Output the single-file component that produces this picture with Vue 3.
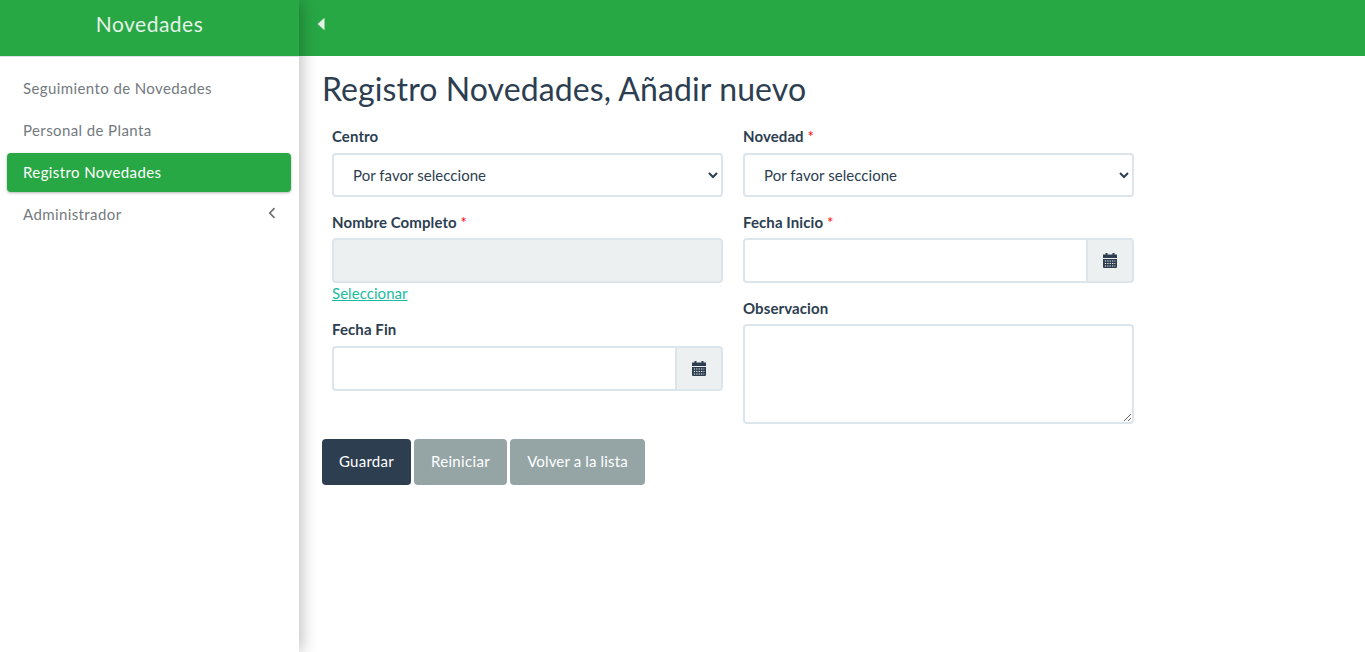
<script setup>
const menu = [
  { label: 'Seguimiento de Novedades' },
  { label: 'Personal de Planta' },
  { label: 'Registro Novedades', active: true },
  { label: 'Administrador', arrow: true }
]
</script>

<template>
  <div class="page">
    <aside class="sidebar">
      <div class="brand">Novedades</div>
      <nav class="menu">
        <a v-for="item in menu" :key="item.label" class="item" :class="{ active: item.active }">
          <span>{{ item.label }}</span>
          <svg v-if="item.arrow" class="chev" width="8" height="12" viewBox="0 0 8 12"><path d="M6.5 1.2 1.8 6l4.7 4.8" fill="none" stroke="#6b7074" stroke-width="1.7"/></svg>
        </a>
      </nav>
    </aside>
    <div class="main">
      <header class="topbar">
        <svg class="toggle" width="8" height="14" viewBox="0 0 8 14"><path d="M7.5 0.8v12.4L0.6 7z" fill="#e4f3e8"/></svg>
      </header>
      <section class="content">
        <h1 class="title">Registro Novedades, Añadir nuevo</h1>
        <form class="form" @submit.prevent>
          <div class="columns">
            <div class="col">
              <div class="group">
                <label>Centro</label>
                <select class="control"><option>Por favor seleccione</option></select>
              </div>
              <div class="group">
                <label>Nombre Completo <i>*</i></label>
                <input class="control disabled" disabled />
                <a class="link">Seleccionar</a>
              </div>
              <div class="group flush">
                <label>Fecha Fin</label>
                <div class="date">
                  <input class="control" />
                  <span class="addon">
                    <svg width="14" height="15" viewBox="0 0 14 15"><path fill="#2c3e50" d="M0 1.5h2.5V0h2v1.5h5V0h2v1.5H14V5H0zM0 6h14v8a1 1 0 0 1-1 1H1a1 1 0 0 1-1-1z"/><path stroke="#fff" stroke-width="1" stroke-dasharray="1.2 1.2" d="M1.9 8h10.4M1.9 10.5h10.4M1.9 13h10.4"/></svg>
                  </span>
                </div>
              </div>
            </div>
            <div class="col">
              <div class="group">
                <label>Novedad <i>*</i></label>
                <select class="control"><option>Por favor seleccione</option></select>
              </div>
              <div class="group">
                <label>Fecha Inicio <i>*</i></label>
                <div class="date">
                  <input class="control" />
                  <span class="addon">
                    <svg width="14" height="15" viewBox="0 0 14 15"><path fill="#2c3e50" d="M0 1.5h2.5V0h2v1.5h5V0h2v1.5H14V5H0zM0 6h14v8a1 1 0 0 1-1 1H1a1 1 0 0 1-1-1z"/><path stroke="#fff" stroke-width="1" stroke-dasharray="1.2 1.2" d="M1.9 8h10.4M1.9 10.5h10.4M1.9 13h10.4"/></svg>
                  </span>
                </div>
              </div>
              <div class="group">
                <label>Observacion</label>
                <textarea class="control area"></textarea>
              </div>
            </div>
          </div>
          <div class="actions">
            <button class="btn primary">Guardar</button>
            <button class="btn muted reset" type="button">Reiniciar</button>
            <button class="btn muted back" type="button">Volver a la lista</button>
          </div>
        </form>
      </section>
    </div>
  </div>
</template>

<style>
html, body { margin: 0; background: #fff; overflow: hidden; }
</style>

<style scoped>
.page {
  display: flex;
  height: 652px;
  font-family: Lato, "Liberation Sans", sans-serif;
  font-size: 15px;
  line-height: 22.5px;
  color: #2c3e50;
}
.sidebar {
  position: relative;
  z-index: 2;
  width: 299px;
  flex: none;
  background: #fff;
  box-shadow: 3px 0 15px rgba(0, 0, 0, 0.25);
}
.brand {
  height: 57px;
  background: #28a745;
  color: #e4f3e8;
  font-size: 21px;
  letter-spacing: 0.5px;
  line-height: 48px;
  text-align: center;
  border-bottom: 1px solid #dee2e6;
  box-sizing: border-box;
}
.menu {
  display: flex;
  flex-direction: column;
  gap: 3px;
  padding: 12px 8px 0 7px;
}
.item {
  display: flex;
  align-items: center;
  justify-content: space-between;
  height: 39px;
  padding: 0 15px 0 16px;
  border-radius: 4px;
  color: #737a80;
  letter-spacing: 0.4px;
}
.item.active {
  background: #28a745;
  color: #fff;
  box-shadow: 0 1px 3px rgba(0, 0, 0, 0.3);
}
.chev { margin-top: -3px; }
.main { flex: 1; min-width: 0; }
.topbar {
  display: flex;
  align-items: center;
  height: 56px;
  background: #28a745;
  padding-left: 18px;
  box-sizing: border-box;
}
.toggle { margin-top: -8px; }
.content { padding: 0 23px; }
.title {
  margin: 14px 0 0;
  font-size: 32px;
  font-weight: 400;
  line-height: 38px;
  letter-spacing: 0.1px;
}
.form { width: 822px; margin-top: 17px; }
.columns { display: flex; }
.col {
  width: 411px;
  box-sizing: border-box;
  padding: 0 10px;
}
.group { margin-bottom: 13px; }
label {
  display: block;
  font-weight: 700;
  letter-spacing: 0.1px;
  margin-bottom: 5.5px;
}
.group + .group label {
  padding-top: 1px;
  margin-bottom: 4.5px;
}
.group.flush label {
  padding-top: 0;
  margin-bottom: 5.5px;
}
label i { color: #f00; font-style: normal; font-weight: 400; }
.control {
  display: block;
  width: 100%;
  height: 45px;
  box-sizing: border-box;
  border: 2px solid #dce4ec;
  border-radius: 4px;
  background: #fff;
  color: #2c3e50;
  font: inherit;
  letter-spacing: 0.05px;
  padding: 0 15px;
  outline: none;
}
select.control { height: 44px; }
.disabled { background: #ecf0f1; }
.area { height: 100px; padding: 10px 15px; }
.link {
  display: block;
  margin: -1px 0 0.5px;
  color: #18bc9c;
  letter-spacing: 0.05px;
  text-decoration: underline;
}
.date { display: flex; }
.date .control { flex: 1; min-width: 0; border-radius: 4px 0 0 4px; }
.addon {
  display: flex;
  align-items: center;
  justify-content: center;
  width: 46px;
  height: 45px;
  box-sizing: border-box;
  background: #ecf0f1;
  border: 2px solid #dce4ec;
  border-left: 0;
  border-radius: 0 4px 4px 0;
}
.actions { display: flex; gap: 3px; margin-top: 2px; }
.btn {
  height: 46px;
  border: 0;
  border-radius: 4px;
  color: #fff;
  font: inherit;
  letter-spacing: 0.25px;
  padding: 0 17px 1px;
}
.primary { background: #2c3e50; }
.muted { background: #95a5a6; }
.reset { letter-spacing: 0.35px; }
.back { letter-spacing: 0.15px; }
</style>
